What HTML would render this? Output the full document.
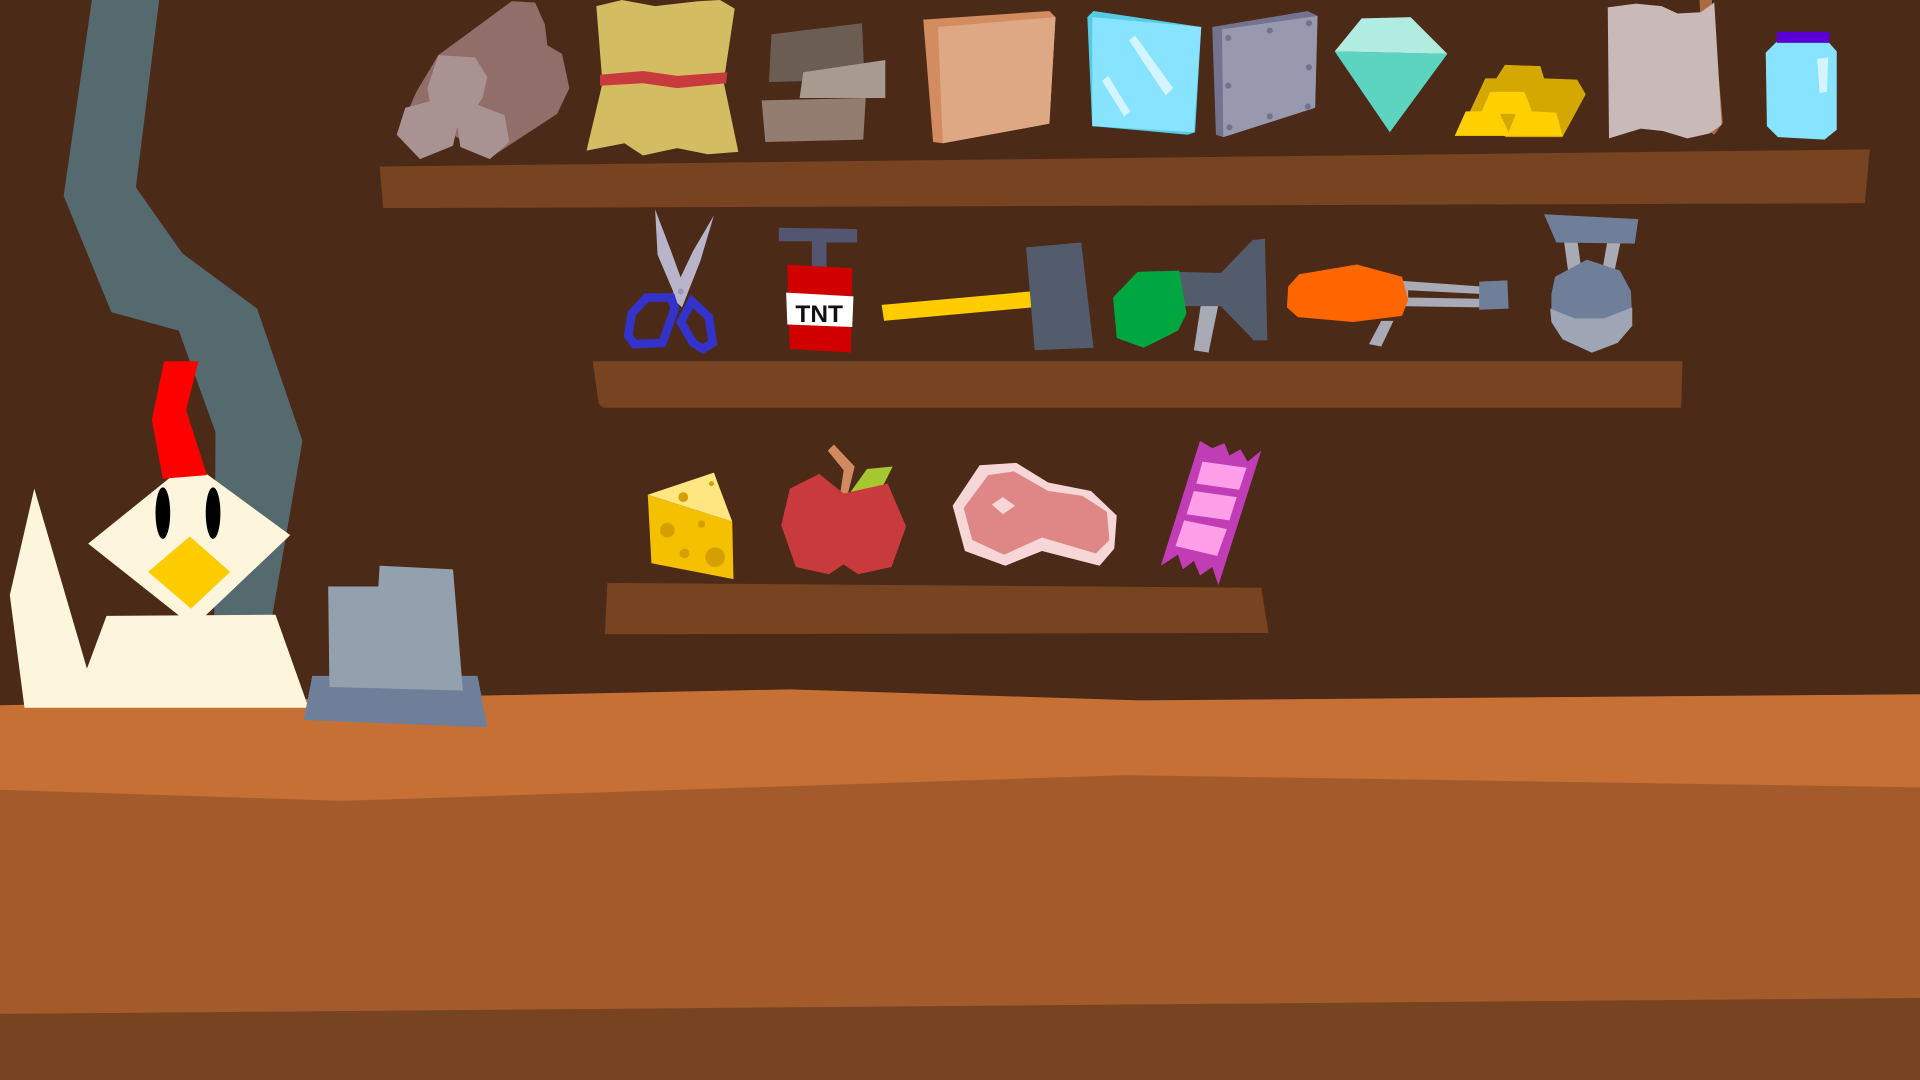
<!DOCTYPE html>
<html><head><meta charset="utf-8"><style>html,body{margin:0;padding:0;background:#4b2a17;overflow:hidden}svg{display:block}</style></head><body>
<svg width="1920" height="1080" viewBox="0 0 1568 882" preserveAspectRatio="none" xmlns="http://www.w3.org/2000/svg">
<rect width="1568" height="882" fill="#4b2a17"/>
<!-- pipe -->
<polygon fill="#546a6f" points="75,0 130,0 111,153 149,207 210,252 247,360 222,505 175,505 176,353 146,270 91,255 52,160"/>
<!-- shelves -->
<polygon fill="#774321" points="310,136 1527,122 1523,166 313,170"/>
<polygon fill="#774321" points="484,295 1374,295 1373,333 493,333 489,330"/>
<polygon fill="#774321" points="496,476 1030,480 1036,517 494,518"/>
<!-- rocks -->
<polygon fill="#926e6a" points="358,45 418,1 437,2 445,20 447,37 459,44 465,72 455,93 400,129 370,110 330,98 340,75"/>
<polygon fill="#a99392" points="358,45 388,47 398,63 394,80 383,97 370,107 353,93 349,72"/>
<polygon fill="#a99392" points="331,88 365,79 374,100 370,119 343,130 324,110"/>
<polygon fill="#a99392" points="386,84 412,94 416,116 400,130 376,120 373,100"/>
<!-- sand bundle -->
<polygon fill="#d3bc62" points="487,5 508,0 535,5 570,1 588,0 600,7 591,67 603,124 578,126 553,121 525,127 510,117 479,123 492,68"/>
<polygon fill="#c83a3b" points="490,61 525,58 553,62 594,59 593,68 553,72 525,68 490,70"/>
<!-- stone slabs -->
<polygon fill="#6b5d52" points="630,28 704,19 706,65 628,67"/>
<polygon fill="#a79a8e" points="656,59 723,49 723,80 653,80"/>
<polygon fill="#927d70" points="622,82 707,80 705,114 625,116"/>
<!-- copper -->
<polygon fill="#d38b60" points="754,16 857,9 862,14 857,101 770,117 762,116"/>
<polygon fill="#dfa884" points="766,22 862,14 857,101 770,117"/>
<!-- glass -->
<polygon fill="#55cbe6" points="888,14 893,9 981,22 976,108 970,110 892,103"/>
<polygon fill="#87e3ff" points="892,14 981,22 975,108 892,103"/>
<polygon fill="#d4f4ff" points="922,33 927,29 958,72 952,78"/>
<polygon fill="#d4f4ff" points="900,66 905,62 923,91 918,95"/>
<!-- metal -->
<polygon fill="#737390" points="990,22 1068,9 1076,13 1074,88 999,112 993,110"/>
<polygon fill="#9899ae" points="998,24 1076,13 1074,88 999,112"/>
<g fill="#737390"><circle cx="1003" cy="31" r="2.5"/><circle cx="1069" cy="19" r="2.5"/><circle cx="1003" cy="70" r="2.5"/><circle cx="1069" cy="55" r="2.5"/><circle cx="1004" cy="104" r="2.5"/><circle cx="1068" cy="87" r="2.5"/><circle cx="1037" cy="25" r="2.5"/><circle cx="1037" cy="95" r="2.5"/></g>
<!-- diamond -->
<polygon fill="#5dd4bf" points="1090,42 1182,44 1135,108"/>
<polygon fill="#b0ece1" points="1112,15 1152,14 1182,44 1090,42"/>
<!-- gold -->
<polygon fill="#d4a800" points="1213,64 1222,64 1229,53 1258,54 1261,64 1288,65 1295,77 1276,112 1230,112 1200,92"/>
<polygon fill="#ffd000" points="1197,91 1210,91 1217,75 1245,75 1251,91 1271,92 1276,111 1188,111"/>
<polygon fill="#d4a800" points="1225,93 1238,93 1232,108"/>
<!-- paper -->
<polygon fill="#a96b43" points="1388,0 1398,0 1407,100 1400,110 1392,105"/>
<polygon fill="#c9b9b8" points="1313,6 1336,3 1357,5 1370,11 1389,10 1400,2 1406,102 1396,109 1378,113 1358,107 1340,105 1314,113"/>
<!-- jar -->
<polygon fill="#87e3ff" points="1442,43 1452,33 1492,33 1500,42 1500,106 1490,114 1452,112 1443,103"/>
<rect x="1451" y="26" width="43" height="9" fill="#5a00d6"/>
<polygon fill="#d4f4ff" points="1484,48 1493,47 1492,75 1486,76"/>
<!-- scissors -->
<polygon fill="#b8b4c9" points="535,171 548,205 560,238 554,248 537,208"/>
<polygon fill="#b8b4c9" points="583,176 572,213 557,251 548,243 566,205"/>
<circle cx="556" cy="238" r="2.5" fill="#9e98b2"/>
<g fill="none" stroke="#3333cc" stroke-width="7"><polygon points="528,243 548,243 551,252 541,280 518,281 513,274 516,256"/><polygon points="565,246 579,259 582,280 574,285 566,280 556,263"/></g>
<!-- TNT -->
<polygon fill="#535670" points="636,186 700,187 700,198 675,198 675,220 663,219 663,197 636,197"/>
<polygon fill="#d10000" points="643,216 696,219 695,288 645,285"/>
<polygon fill="#ffffff" points="642,239 697,242 696,267 643,265"/>
<text x="669" y="263" font-family="Liberation Sans, sans-serif" font-weight="bold" font-size="20" text-anchor="middle" fill="#111">TNT</text>
<!-- hammer -->
<polygon fill="#ffcc00" points="720,249 842,238 843,251 722,262"/>
<polygon fill="#535c6c" points="838,202 883,198 893,284 845,286"/>
<!-- drill -->
<polygon fill="#a8abb5" points="981,247 995,249 987,288 975,286"/>
<polygon fill="#535c6c" points="962,222 997,223 1023,196 1033,195 1035,278 1024,278 997,250 962,250"/>
<polygon fill="#00a63f" points="929,222 963,221 969,256 962,270 934,284 912,276 909,243"/>
<!-- orange tool -->
<polygon fill="#a8abb5" points="1128,262 1138,262 1128,283 1118,281"/>
<polygon fill="#a8abb5" points="1140,229 1210,234 1210,251 1140,250"/>
<polygon fill="#535c6c" points="1140,235 1209,239 1209,245 1140,244" opacity="0.0"/>
<polygon fill="#4b2a17" points="1150,237 1208,240 1208,244 1150,243"/>
<polygon fill="#6f7f99" points="1208,230 1231,229 1232,252 1208,253"/>
<polygon fill="#ff6600" points="1061,224 1108,216 1145,226 1150,245 1145,258 1105,263 1060,259 1051,251 1052,234"/>
<!-- kettlebell -->
<polygon fill="#a8abb5" points="1277,195 1288,195 1292,224 1281,224"/>
<polygon fill="#a8abb5" points="1313,195 1324,195 1318,224 1308,224"/>
<polygon fill="#6f7f99" points="1261,175 1338,179 1335,199 1271,198"/>
<polygon fill="#6f7f99" points="1270,226 1296,212 1323,221 1332,238 1333,266 1321,280 1300,288 1276,277 1267,263 1267,240"/>
<polygon fill="#9ea5b5" points="1266,252 1286,260 1310,260 1333,251 1333,266 1321,280 1300,288 1276,277 1267,263"/>
<!-- cheese -->
<polygon fill="#ffe680" points="529,404 583,386 598,426"/>
<polygon fill="#f5c000" points="529,404 598,426 599,473 532,460"/>
<g fill="#d4a000"><circle cx="558" cy="406" r="4"/><circle cx="581" cy="395" r="2"/><circle cx="545" cy="433" r="6"/><circle cx="573" cy="428" r="3"/><circle cx="559" cy="452" r="4"/><circle cx="584" cy="455" r="8"/></g>
<!-- apple -->
<polygon fill="#d18a5f" points="676,368 681,363 698,381 692,405 686,404 689,384"/>
<polygon fill="#a5c72f" points="708,383 729,381 721,397 693,404"/>
<polygon fill="#c83a3b" points="645,399 669,387 689,403 725,395 740,430 728,463 701,469 689,461 677,469 650,463 638,429"/>
<!-- meat -->
<polygon fill="#f6d6d6" points="800,380 830,378 856,394 891,401 912,421 910,448 898,462 851,450 821,462 788,450 778,413"/>
<polygon fill="#df8686" points="807,388 828,385 856,401 884,405 904,418 906,441 895,452 851,439 820,453 794,441 787,415"/>
<polygon fill="#f6d6d6" points="810,412 819,406 829,413 819,420"/>
<!-- candy -->
<polygon fill="#c03db5" points="980,360 990,366 1000,362 1004,372 1013,367 1019,377 1030,368 995,478 990,463 980,470 975,458 966,465 962,453 948,462"/>
<g fill="#ff9ee9"><polygon points="982,377 1018,382 1012,400 977,395"/><polygon points="975,401 1010,406 1004,425 969,420"/><polygon points="967,425 1002,432 994,454 960,446"/></g>
<!-- counter -->
<polygon fill="#c77036" points="0,576 645,563 930,572 1568,567 1568,882 0,882"/>
<polygon fill="#a45b2c" points="0,645 280,654 920,633 1568,643 1568,882 0,882"/>
<polygon fill="#774321" points="0,828 1568,815 1568,882 0,882"/>
<!-- chicken -->
<polygon fill="#fef6dc" points="28,399 71,546 87,503 225,502 252,578 20,578 8,486"/>
<polygon fill="#fef6dc" points="72,444 155,377 237,437 158,512"/>
<polygon fill="#ff0000" points="134,295 162,295 152,335 169,388 133,391 124,343"/>
<ellipse cx="133" cy="419" rx="6" ry="21" fill="#000"/>
<ellipse cx="174" cy="419" rx="6" ry="21" fill="#000"/>
<polygon fill="#ffcc00" points="121,467 155,438 188,467 156,497"/>
<!-- grey block on counter -->
<polygon fill="#6f7f99" points="255,552 390,552 398,594 248,588"/>
<polygon fill="#93a0ad" points="268,479 309,479 310,462 370,465 378,564 269,561"/>
</svg>
</body></html>
